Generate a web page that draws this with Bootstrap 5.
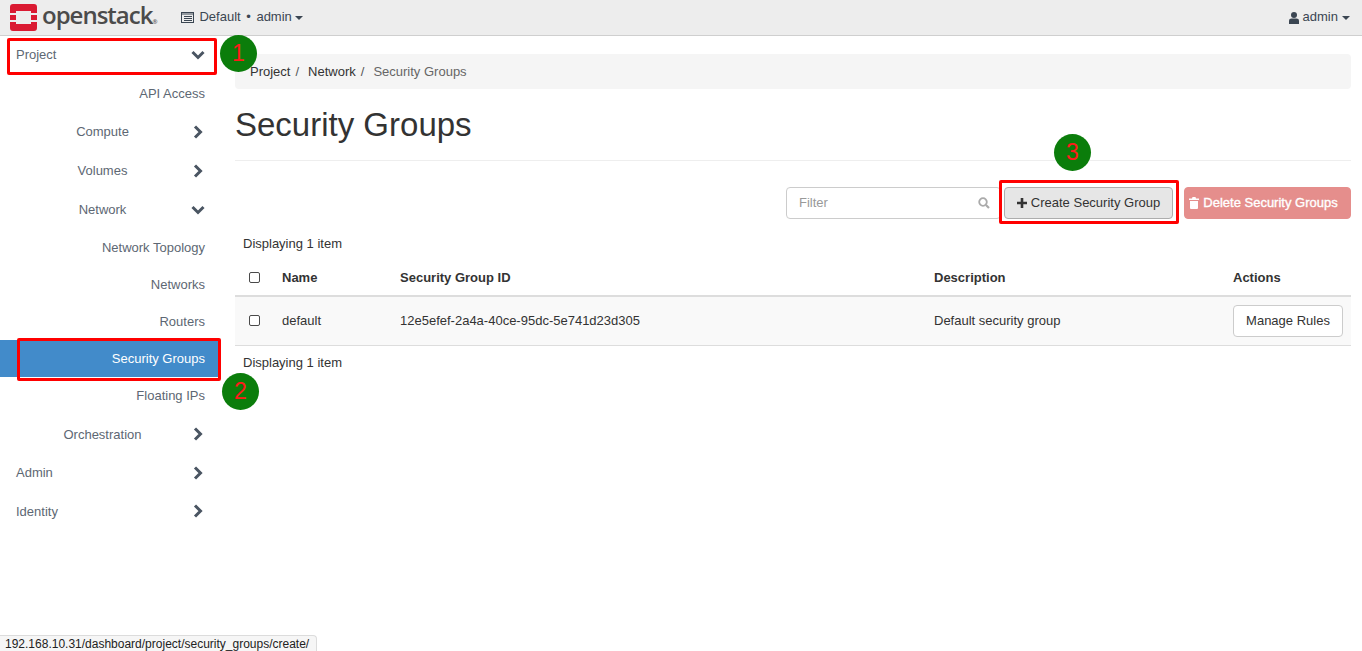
<!DOCTYPE html>
<html lang="en">

<head>
    <meta charset="UTF-8" />
    <meta name="viewport" content="width=device-width, initial-scale=1.0" />
    <title>Security Groups</title>
    <link rel="stylesheet" href="https://cdn.jsdelivr.net/npm/bootstrap@5.3.3/dist/css/bootstrap.min.css">
    <style>
        html, body { height: 100%; overflow: hidden; }
        body { font-family: "Liberation Sans", Arial, sans-serif; font-size: 13px; color: #333; background: #fff; }
        .top-bar { height: 36px; background: #ededed; border-bottom: 1px solid #cfcfcf; color: #3b4652; }
        .logo-text { font-family: "Open Sans", sans-serif; font-size: 24px; font-weight: 600; line-height: 32px; letter-spacing: -1px; color: #4b4b4b; margin-left: 5px; padding-bottom: 5px; }
        .logo-text sup { font-size: 6px; top: 0; vertical-align: baseline; }
        .top-text { padding-bottom: 2px; }
        .side-col { width: 220px; flex: none; color: #5d6773; }
        .side-row { height: 38.6px; color: #5d6773; text-decoration: none; padding-left: 16px; padding-right: 15px; }
        .side-row .side-up { padding-bottom: 1px; }
        .side-row.side-mid span { flex-grow: 1; text-align: center; }
        .side-row.side-top span { flex-grow: 1; }
        .side-row.side-mid { padding-left: 14px; padding-right: 15px; }
        .side-leaf { height: 37px; justify-content: flex-end; }
        .side-first { height: 38.6px; }
        .side-active { background: #428bca; color: #fff; }
        .side-gap { margin-top: 1px; }
        .main-col { flex: 1; padding: 18px 11px 0 15px; min-width: 0; }
        .crumb-box { background: #f5f5f5; border-radius: 4px; height: 35px; padding: 0 15px; margin: 0; --bs-breadcrumb-item-padding-x: 5px; --bs-breadcrumb-margin-bottom: 0; }
        .crumb-box a { color: #333; text-decoration: none; }
        .crumb-box .active { color: #666; }
        .crumb-box .breadcrumb-item + .breadcrumb-item { padding-left: 9px; }
        .crumb-box .breadcrumb-item + .breadcrumb-item::before { display: none; }
        .crumb-slash { color: #555; margin-left: 5px; }
        .page-head { border-bottom: 1px solid #eee; height: 72px; margin: 0 0 26px; }
        .page-head h1 { font-size: 33px; font-weight: 400; line-height: 71px; margin: 0; color: #333; }
        .tool-row { height: 32px; }
        .filter-box { width: 215px; height: 32px; border: 1px solid #ccc; border-radius: 4px; padding: 0 10px 0 12px; color: #999; }
        .btn-create, .btn-create:hover { height: 32px; width: 169px; margin-left: 3px; background: #e6e6e6; border: 1px solid #adadad; border-radius: 4px; color: #333; font-size: 13px; padding: 0; white-space: nowrap; }
        .btn-remove, .btn-remove:disabled { height: 32px; width: 167px; margin-left: 11px; background: #e58e8c; border: 1px solid #e58e8c; border-radius: 4px; color: #fff; font-size: 13px; -webkit-text-stroke: .35px #fff; padding: 0 8px 0 0; opacity: 1; white-space: nowrap; }
        .count-note { padding: 0 8px; height: 20px; line-height: 20px; color: #333; }
        .sg-table { table-layout: fixed; width: 100%; margin: 6px 0 7px; --bs-table-bg: transparent; }
        .sg-table th { font-weight: 700; height: 36px; padding: 0 8px; vertical-align: middle; border-bottom: 2px solid #ddd; color: #333; }
        .sg-table td { height: 49px; padding: 0 8px; vertical-align: middle; background: #f9f9f9; border-bottom: 1px solid #ddd; color: #333; }
        .tick-box { width: 11px; height: 11px; border: 1px solid #4a4a4a; border-radius: 2px; background: #fff; display: block; margin-left: 6px; }
        .btn-rules, .btn-rules:hover { height: 32px; width: 110px; background: #fff; border: 1px solid #ccc; border-radius: 4px; color: #333; font-size: 13px; padding: 0; }
        .mark-box { position: absolute; border: 3px solid #ff0000; border-radius: 2px; pointer-events: none; }
        .mark-one { left: 7px; top: 38px; width: 210px; height: 37px; }
        .mark-two { left: 17px; top: 338px; width: 204px; height: 43px; }
        .mark-three { left: 999px; top: 180px; width: 180px; height: 44px; }
        .mark-dot { position: absolute; width: 37px; height: 37px; border-radius: 50%; background: #0b7d0b; color: #ff1a1a; font-size: 23px; line-height: 37px; text-align: center; }
        .dot-one { left: 220px; top: 35px; }
        .dot-two { left: 222px; top: 373px; }
        .dot-three { left: 1054px; top: 134px; }
        .status-bubble { position: absolute; left: 0; bottom: 0; width: 317px; height: 16px; background: #f6f6f6; border: 1px solid #dcdcdc; border-left: 0; border-bottom: 0; border-top-right-radius: 4px; padding-left: 5px; font-size: 12px; line-height: 17px; color: #222; white-space: nowrap; overflow: hidden; }
    </style>
</head>

<body>

    <!-- top bar -->
    <div class="top-bar d-flex align-items-center">
        <div class="d-flex align-items-center" style="margin-left:10px">
            <svg width="27" height="27" viewBox="0 0 27 27">
                <path fill="#da1a32" d="M3 0h21a3 3 0 0 1 3 3v6h-6V7H6v2H0V3a3 3 0 0 1 3-3zM0 11h6v5H0zM21 11h6v5h-6zM0 18h6v2h15v-2h6v6a3 3 0 0 1-3 3H3a3 3 0 0 1-3-3z" />
            </svg>
            <span class="logo-text">openstack<sup>®</sup></span>
        </div>
        <div class="d-flex align-items-center" style="margin-left:25px">
            <svg width="13" height="11" viewBox="0 0 13 11" style="margin-right:5px">
                <rect x=".5" y=".5" width="12" height="10" fill="none" stroke="#3b4652" />
                <path d="M1 2h11M3 4.500h8M3 6.500h8M3 8.500h8" stroke="#3b4652" />
            </svg>
            <span class="top-text" style="word-spacing:2px">Default • admin</span>
            <span style="border:4px solid transparent;border-top-color:#3b4652;border-bottom:0;margin-left:3px;width:0"></span>
        </div>
        <div class="d-flex align-items-center ms-auto" style="margin-right:12px">
            <svg width="10" height="12" viewBox="0 0 10 12" style="margin-right:4px">
                <circle cx="5" cy="3" r="3" fill="#3b4652" />
                <path d="M0 12V8.500Q0 6.500 2.500 6.500h5Q10 6.500 10 8.500V12z" fill="#3b4652" />
            </svg>
            <span class="top-text">admin</span>
            <span style="border:4px solid transparent;border-top-color:#3b4652;border-bottom:0;margin-left:4px;width:0"></span>
        </div>
    </div>

    <div class="d-flex">
        <!-- sidebar -->
        <div class="side-col">
            <a class="side-row side-top d-flex align-items-center" href="#"><span class="side-up">Project</span>
                <svg width="14" height="10" viewBox="0 0 14 10"><path d="M1.500 2l5.500 5.500L12.500 2" fill="none" stroke="#4a5562" stroke-width="3" /></svg></a>
            <a class="side-row side-leaf d-flex align-items-center side-first" href="#">API Access</a>
            <a class="side-row side-mid d-flex align-items-center" href="#"><span class="side-up">Compute</span>
                <svg width="14" height="14" viewBox="0 0 14 14"><path d="M4 1.500l5.500 5.500L4 12.500" fill="none" stroke="#4a5562" stroke-width="3" /></svg></a>
            <a class="side-row side-mid d-flex align-items-center" href="#"><span>Volumes</span>
                <svg width="14" height="14" viewBox="0 0 14 14"><path d="M4 1.500l5.500 5.500L4 12.500" fill="none" stroke="#4a5562" stroke-width="3" /></svg></a>
            <a class="side-row side-mid d-flex align-items-center" href="#"><span>Network</span>
                <svg width="14" height="10" viewBox="0 0 14 10"><path d="M1.500 2l5.500 5.500L12.500 2" fill="none" stroke="#4a5562" stroke-width="3" /></svg></a>
            <a class="side-row side-leaf d-flex align-items-center" href="#">Network Topology</a>
            <a class="side-row side-leaf d-flex align-items-center" href="#">Networks</a>
            <a class="side-row side-leaf d-flex align-items-center" href="#">Routers</a>
            <a class="side-row side-leaf side-active d-flex align-items-center" href="#">Security Groups</a>
            <a class="side-row side-leaf d-flex align-items-center" href="#">Floating IPs</a>
            <a class="side-row side-mid side-gap d-flex align-items-center" href="#"><span>Orchestration</span>
                <svg width="14" height="14" viewBox="0 0 14 14"><path d="M4 1.500l5.500 5.500L4 12.500" fill="none" stroke="#4a5562" stroke-width="3" /></svg></a>
            <a class="side-row side-top d-flex align-items-center" href="#"><span>Admin</span>
                <svg width="14" height="14" viewBox="0 0 14 14"><path d="M4 1.500l5.500 5.500L4 12.500" fill="none" stroke="#4a5562" stroke-width="3" /></svg></a>
            <a class="side-row side-top d-flex align-items-center" href="#"><span>Identity</span>
                <svg width="14" height="14" viewBox="0 0 14 14"><path d="M4 1.500l5.500 5.500L4 12.500" fill="none" stroke="#4a5562" stroke-width="3" /></svg></a>
        </div>

        <!-- main -->
        <div class="main-col">
            <ol class="breadcrumb crumb-box align-items-center">
                <li class="breadcrumb-item"><a href="#">Project</a><span class="crumb-slash">/</span></li>
                <li class="breadcrumb-item"><a href="#">Network</a><span class="crumb-slash">/</span></li>
                <li class="breadcrumb-item active">Security Groups</li>
            </ol>
            <div class="page-head">
                <h1>Security Groups</h1>
            </div>

            <div class="tool-row d-flex justify-content-end">
                <div class="filter-box d-flex align-items-center justify-content-between">
                    <span>Filter</span>
                    <svg width="12" height="12" viewBox="0 0 12 12"><circle cx="5" cy="5" r="3.800" fill="none" stroke="#aaa" stroke-width="1.800" /><path d="M8 8l3 3" stroke="#aaa" stroke-width="2.200" /></svg>
                </div>
                <button class="btn btn-create d-flex align-items-center justify-content-center" type="button">
                    <svg width="10" height="10" viewBox="0 0 10 10" class="me-1"><path d="M5 0v10M0 5h10" stroke="#333" stroke-width="2.600" /></svg>Create Security Group
                </button>
                <button class="btn btn-remove d-flex align-items-center justify-content-center" type="button" disabled>
                    <svg width="10" height="12" viewBox="0 0 10 12" style="margin-right:4px"><path fill="#fff" d="M3.500 0h3l.5 1.500h3V3H0V1.500h3zM1 4h8v7a1 1 0 0 1-1 1H2a1 1 0 0 1-1-1z" /></svg>Delete Security Groups
                </button>
            </div>

            <div class="count-note" style="margin-top:15px">Displaying 1 item</div>
            <table class="table sg-table">
                <colgroup>
                    <col style="width:39px">
                    <col style="width:118px">
                    <col style="width:534px">
                    <col style="width:299px">
                    <col>
                </colgroup>
                <thead>
                    <tr>
                        <th><span class="tick-box"></span></th>
                        <th>Name</th>
                        <th>Security Group ID</th>
                        <th>Description</th>
                        <th>Actions</th>
                    </tr>
                </thead>
                <tbody>
                    <tr>
                        <td><span class="tick-box"></span></td>
                        <td>default</td>
                        <td>12e5efef-2a4a-40ce-95dc-5e741d23d305</td>
                        <td>Default security group</td>
                        <td><button class="btn btn-rules" type="button">Manage Rules</button></td>
                    </tr>
                </tbody>
            </table>
            <div class="count-note">Displaying 1 item</div>
        </div>
    </div>

    <!-- annotations drawn over the screenshot -->
    <div class="mark-box mark-one"></div>
    <div class="mark-box mark-two"></div>
    <div class="mark-box mark-three"></div>
    <div class="mark-dot dot-one">1</div>
    <div class="mark-dot dot-two">2</div>
    <div class="mark-dot dot-three">3</div>

    <div class="status-bubble">192.168.10.31/dashboard/project/security_groups/create/</div>

</body>

</html>
